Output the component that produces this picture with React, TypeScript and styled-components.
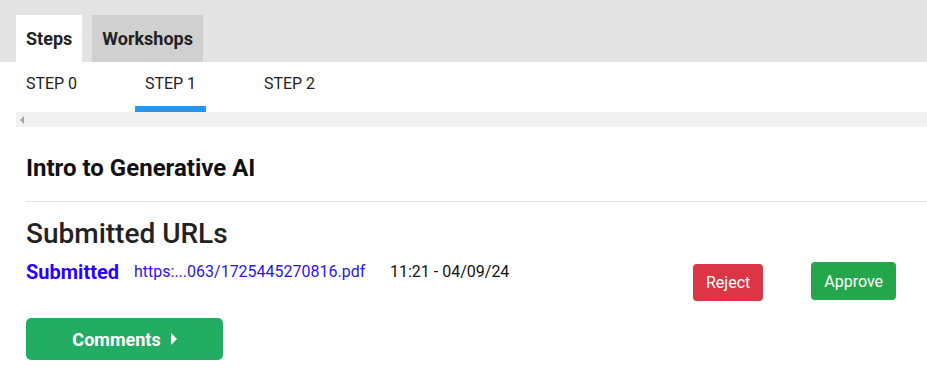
import React from 'react'
import styled, { createGlobalStyle } from 'styled-components'

const GlobalStyle = createGlobalStyle`
  body {
    margin: 0;
    background: #fff;
    font-family: Roboto, 'Liberation Sans', sans-serif;
    color: #222;
  }
`

const TopBar = styled.div`
  display: flex;
  gap: 10px;
  padding: 15px 16px 0;
  background: #e3e3e3;
`

const TopTab = styled.div<{ $active?: boolean }>`
  height: 47px;
  display: flex;
  align-items: center;
  padding: 0 10px;
  font-size: 18px;
  font-weight: 700;
  color: #222;
  background: ${({ $active }) => ($active ? '#fff' : '#d0d0d0')};
`

const StepBar = styled.div`
  display: flex;
  gap: 48px;
  height: 50px;
  padding-left: 16px;
`

const StepTab = styled.div<{ $active?: boolean }>`
  width: 71px;
  display: flex;
  justify-content: center;
  padding-top: 12px;
  box-sizing: border-box;
  font-size: 16px;
  line-height: 19px;
  text-transform: uppercase;
  color: #222;
  border-bottom: 6px solid ${({ $active }) => ($active ? '#2196f3' : 'transparent')};
`

const ScrollTrack = styled.div`
  height: 15px;
  margin-left: 16px;
  background: #f1f1f1;
  display: flex;
  align-items: center;
  padding-left: 4px;
`

const ScrollArrow = styled.span`
  width: 0;
  height: 0;
  border-top: 4px solid transparent;
  border-bottom: 4px solid transparent;
  border-right: 4px solid #a3a3a3;
`

const Content = styled.div`
  padding-left: 26px;
`

const CourseTitle = styled.h2`
  margin: 26px 0 0;
  font-size: 24px;
  line-height: 30px;
  font-weight: 700;
  color: #111;
  padding-bottom: 18px;
  border-bottom: 1px solid #e2e2e2;
`

const SectionTitle = styled.h1`
  margin: 15px 0 0;
  font-size: 28px;
  line-height: 34px;
  font-weight: 500;
  color: #222;
`

const SubmissionRow = styled.div`
  display: flex;
  align-items: flex-start;
  margin-top: 8px;
  height: 49px;
`

const Status = styled.span`
  width: 108px;
  font-size: 20px;
  line-height: 26px;
  font-weight: 700;
  color: #2a00ff;
`

const FileLink = styled.a`
  width: 256px;
  font-size: 16px;
  line-height: 26px;
  color: #2a14f2;
  text-decoration: none;
`

const Timestamp = styled.span`
  width: 303px;
  font-size: 16px;
  line-height: 26px;
  color: #111;
`

const ActionButton = styled.button<{ $tone: 'reject' | 'approve'; $offset: number }>`
  margin-top: ${({ $offset }) => $offset}px;
  height: ${({ $tone }) => ($tone === 'reject' ? 37 : 38)}px;
  padding: 0 13px;
  border: none;
  border-radius: 4px;
  font-family: inherit;
  font-size: 16px;
  color: #fff;
  background: ${({ $tone }) => ($tone === 'reject' ? '#dc3545' : '#24a74a')};
`

const ButtonGap = styled.div`
  width: 48px;
`

const CommentsButton = styled.button`
  margin-top: 10px;
  width: 197px;
  height: 42px;
  display: flex;
  align-items: center;
  justify-content: center;
  gap: 10px;
  border: none;
  border-radius: 5px;
  background: #22ad63;
  color: #fff;
  font-family: inherit;
  font-size: 18px;
  font-weight: 700;
`

const Caret = styled.span`
  width: 0;
  height: 0;
  border-top: 6px solid transparent;
  border-bottom: 6px solid transparent;
  border-left: 6px solid #fff;
`

const steps = ['Step 0', 'Step 1', 'Step 2']

export default function App() {
  return (
    <>
      <GlobalStyle />
      <TopBar>
        <TopTab $active>Steps</TopTab>
        <TopTab>Workshops</TopTab>
      </TopBar>
      <StepBar>
        {steps.map((s, i) => (
          <StepTab key={s} $active={i === 1}>
            {s}
          </StepTab>
        ))}
      </StepBar>
      <ScrollTrack>
        <ScrollArrow />
      </ScrollTrack>
      <Content>
        <CourseTitle>Intro to Generative AI</CourseTitle>
        <SectionTitle>Submitted URLs</SectionTitle>
        <SubmissionRow>
          <Status>Submitted</Status>
          <FileLink href="#">https:...063/1725445270816.pdf</FileLink>
          <Timestamp>11:21 - 04/09/24</Timestamp>
          <ActionButton $tone="reject" $offset={5}>Reject</ActionButton>
          <ButtonGap />
          <ActionButton $tone="approve" $offset={3}>Approve</ActionButton>
        </SubmissionRow>
        <CommentsButton>
          Comments <Caret />
        </CommentsButton>
      </Content>
    </>
  )
}
